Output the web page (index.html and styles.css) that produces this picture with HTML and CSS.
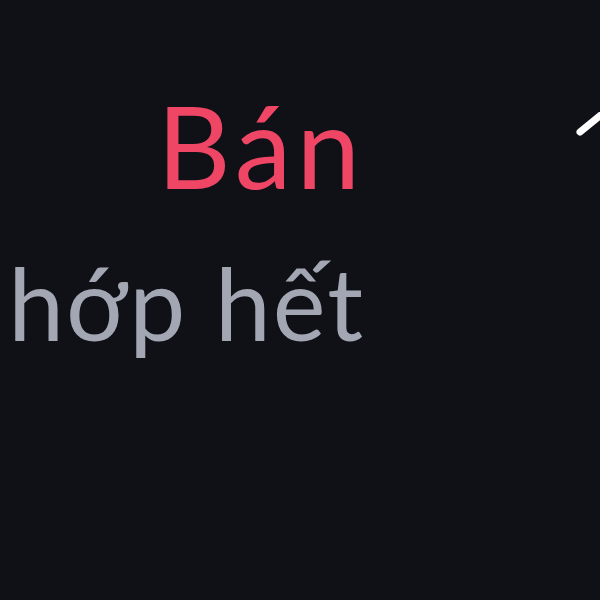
FILE: index.html
```html
<!DOCTYPE html>
<html lang="vi">
<head>
    <meta charset="UTF-8">
    <meta name="viewport" content="width=device-width, initial-scale=1.0">
    <title>Bán</title>
    <link rel="stylesheet" href="styles.css">
</head>
<body>
    <div class="stage">
        <div class="headline">
            <div class="titleClass">Bán</div>
            <div class="subtitleClass">hớp hết</div>
        </div>
        <svg class="iconClass" width="40" height="40" viewBox="0 0 40 40">
            <path d="M4 20 L26 2" stroke="#ffffff" stroke-width="7" stroke-linecap="round" fill="none"/>
        </svg>
    </div>
</body>
</html>
```

FILE: styles.css
```css
body{
    margin: 0;
    width: 600px;
    height: 600px;
    overflow: hidden;
    background: #0f1117;
    font-family: "Lato", "Noto Sans", sans-serif;
}
.stage{
    display: flex;
    align-items: flex-start;
}
.headline{
    width: 365px;
    flex-shrink: 0;
    display: flex;
    flex-direction: column;
    align-items: flex-end;
    padding-top: 88px;
}
.titleClass{
    color: #ef4666;
    font-size: 114px;
    letter-spacing: 5px;
    line-height: 1;
    white-space: nowrap;
}
.subtitleClass{
    color: #a3a7b3;
    font-size: 100px;
    letter-spacing: 2px;
    line-height: 1;
    margin-top: 50px;
    white-space: nowrap;
}
.iconClass{
    flex-shrink: 0;
    margin-left: 211px;
    margin-top: 112px;
}
```
